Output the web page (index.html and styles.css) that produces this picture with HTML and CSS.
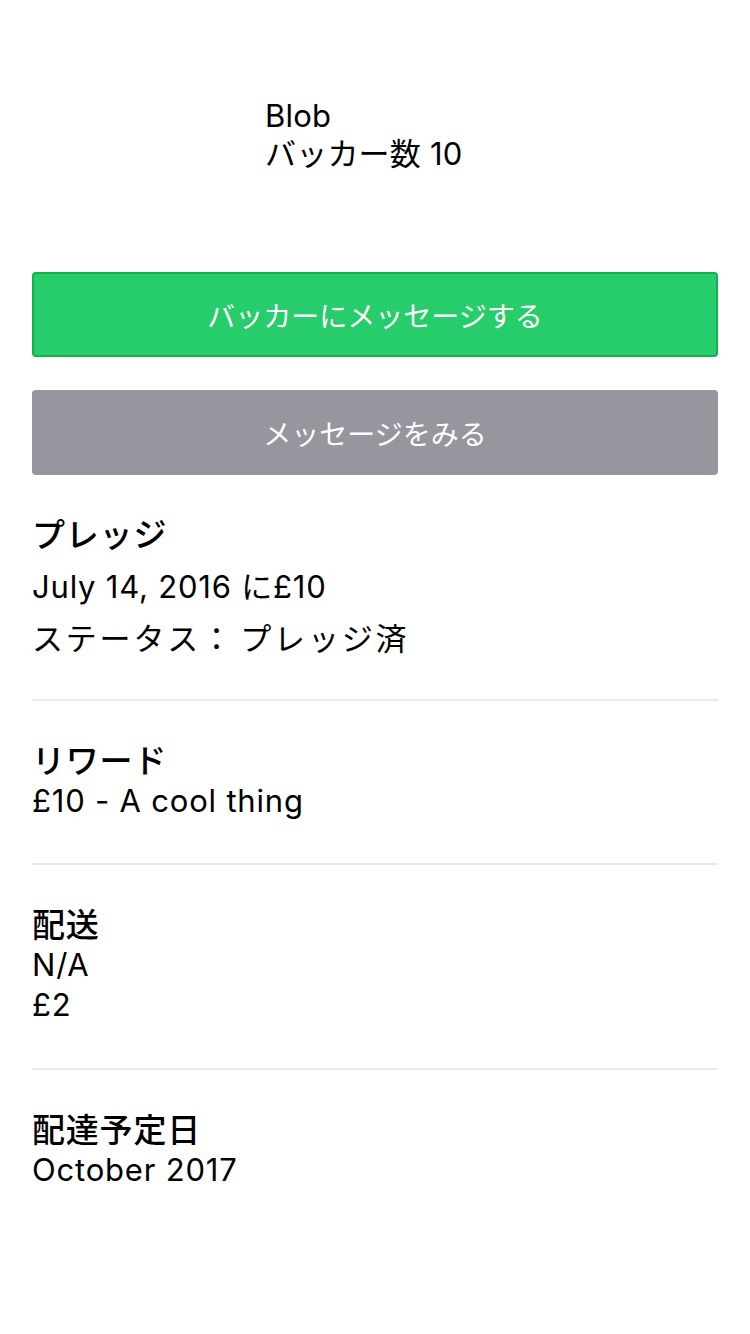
FILE: index.html
```html
<!DOCTYPE html>
<html lang="ja">
<head>
<meta charset="utf-8">
<link rel="stylesheet" href="styles.css">
</head>
<body>
<div class="page">
  <div class="header">
    <div class="avatar"></div>
    <div class="backer">
      <div class="name">Blob</div>
      <div class="count">バッカー数 10</div>
    </div>
  </div>
  <div class="actions">
    <div class="btn btn-green">バッカーにメッセージする</div>
    <div class="btn btn-gray">メッセージをみる</div>
  </div>
  <div class="section pledge">
    <div class="title">プレッジ</div>
    <div class="line">July 14, 2016 に£10</div>
    <div class="line status">ステータス： プレッジ済</div>
  </div>
  <div class="section reward">
    <div class="title">リワード</div>
    <div class="line">£10 - A cool thing</div>
  </div>
  <div class="section shipping">
    <div class="title">配送</div>
    <div class="line">N/A</div>
    <div class="line">£2</div>
  </div>
  <div class="section delivery">
    <div class="title">配達予定日</div>
    <div class="line">October 2017</div>
  </div>
</div>
</body>
</html>
```
FILE: styles.css
```css
html, body {
  margin: 0;
  padding: 0;
  background: #ffffff;
}
body {
  font-family: Inter, "Noto Sans CJK JP", sans-serif;
  color: #000000;
}
.page {
  padding: 0 32px;
}
.header {
  display: flex;
  padding-top: 97px;
}
.avatar {
  width: 233px;
  flex: none;
}
.backer {
  font-size: 31px;
  line-height: 38px;
  letter-spacing: 0.2px;
}
.actions {
  display: flex;
  flex-direction: column;
  gap: 33px;
  margin-top: 99px;
}
.btn {
  height: 85px;
  box-sizing: border-box;
  border-radius: 4px;
  display: flex;
  align-items: center;
  justify-content: center;
  color: #ffffff;
  font-size: 28px;
}
.btn-green {
  background: #27cc6b;
  border: 2px solid #14b04c;
}
.btn-gray {
  background: #96969e;
}
.section {
  font-size: 31px;
  line-height: 40px;
  letter-spacing: 0.8px;
  padding: 40px 0 42px;
  border-bottom: 2px solid #ebebeb;
}
.section .title {
  font-size: 33px;
  font-weight: 500;
}
.status {
  letter-spacing: 2.8px;
  word-spacing: -6px;
}
.pledge {
  line-height: 52px;
  padding: 34px 0 34px;
}
.shipping {
  padding-bottom: 43px;
}
.delivery {
  border-bottom: none;
}
```
